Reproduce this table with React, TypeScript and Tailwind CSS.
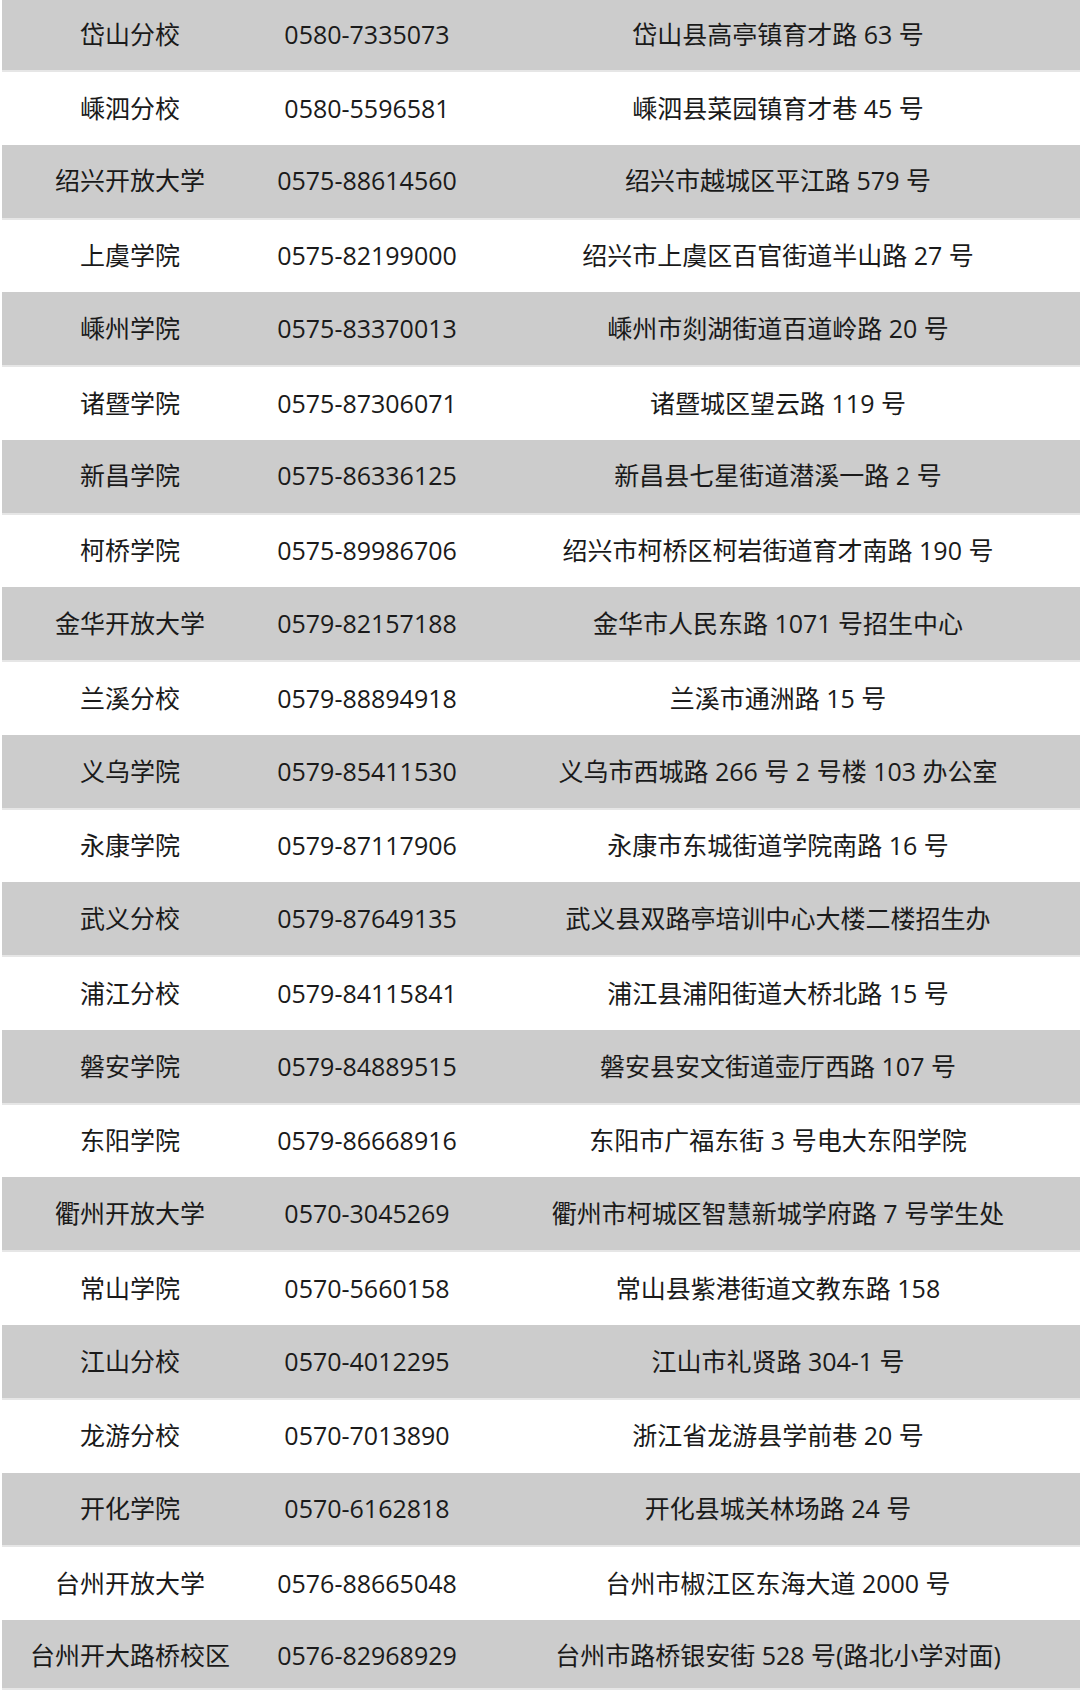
const rows: [string, string, string][] = [
  ["岱山分校", "0580-7335073", "岱山县高亭镇育才路 63 号"],
  ["嵊泗分校", "0580-5596581", "嵊泗县菜园镇育才巷 45 号"],
  ["绍兴开放大学", "0575-88614560", "绍兴市越城区平江路 579 号"],
  ["上虞学院", "0575-82199000", "绍兴市上虞区百官街道半山路 27 号"],
  ["嵊州学院", "0575-83370013", "嵊州市剡湖街道百道岭路 20 号"],
  ["诸暨学院", "0575-87306071", "诸暨城区望云路 119 号"],
  ["新昌学院", "0575-86336125", "新昌县七星街道潜溪一路 2 号"],
  ["柯桥学院", "0575-89986706", "绍兴市柯桥区柯岩街道育才南路 190 号"],
  ["金华开放大学", "0579-82157188", "金华市人民东路 1071 号招生中心"],
  ["兰溪分校", "0579-88894918", "兰溪市通洲路 15 号"],
  ["义乌学院", "0579-85411530", "义乌市西城路 266 号 2 号楼 103 办公室"],
  ["永康学院", "0579-87117906", "永康市东城街道学院南路 16 号"],
  ["武义分校", "0579-87649135", "武义县双路亭培训中心大楼二楼招生办"],
  ["浦江分校", "0579-84115841", "浦江县浦阳街道大桥北路 15 号"],
  ["磐安学院", "0579-84889515", "磐安县安文街道壶厅西路 107 号"],
  ["东阳学院", "0579-86668916", "东阳市广福东街 3 号电大东阳学院"],
  ["衢州开放大学", "0570-3045269", "衢州市柯城区智慧新城学府路 7 号学生处"],
  ["常山学院", "0570-5660158", "常山县紫港街道文教东路 158"],
  ["江山分校", "0570-4012295", "江山市礼贤路 304-1 号"],
  ["龙游分校", "0570-7013890", "浙江省龙游县学前巷 20 号"],
  ["开化学院", "0570-6162818", "开化县城关林场路 24 号"],
  ["台州开放大学", "0576-88665048", "台州市椒江区东海大道 2000 号"],
  ["台州开大路桥校区", "0576-82968929", "台州市路桥银安街 528 号(路北小学对面)"],
];

export default function App() {
  const last = rows.length - 1;
  return (
    <div
      className="flex h-[1690px] w-[1080px] flex-col overflow-hidden bg-white pl-[2px] text-[25px] text-[#1a1a1a]"
      style={{ fontFamily: '"Open Sans", "Noto Sans CJK SC", sans-serif' }}
    >
      {rows.map(([name, phone, addr], i) => (
        <div
          key={name}
          className={
            (i === 0 ? "h-[72px] shrink-0 " : i === last ? "h-[70px] shrink-0 pt-[4px] " : "flex-1 ") +
            (i % 2 === 0
              ? "flex items-center border-b-2 border-[#e6e6e6] bg-[#cccccc]"
              : "flex items-center bg-white")
          }
        >
          <div className="w-[256px] whitespace-nowrap text-center">{name}</div>
          <div className="w-[218px] whitespace-nowrap text-center">{phone}</div>
          <div className="flex-1 whitespace-nowrap text-center">{addr}</div>
        </div>
      ))}
    </div>
  );
}
